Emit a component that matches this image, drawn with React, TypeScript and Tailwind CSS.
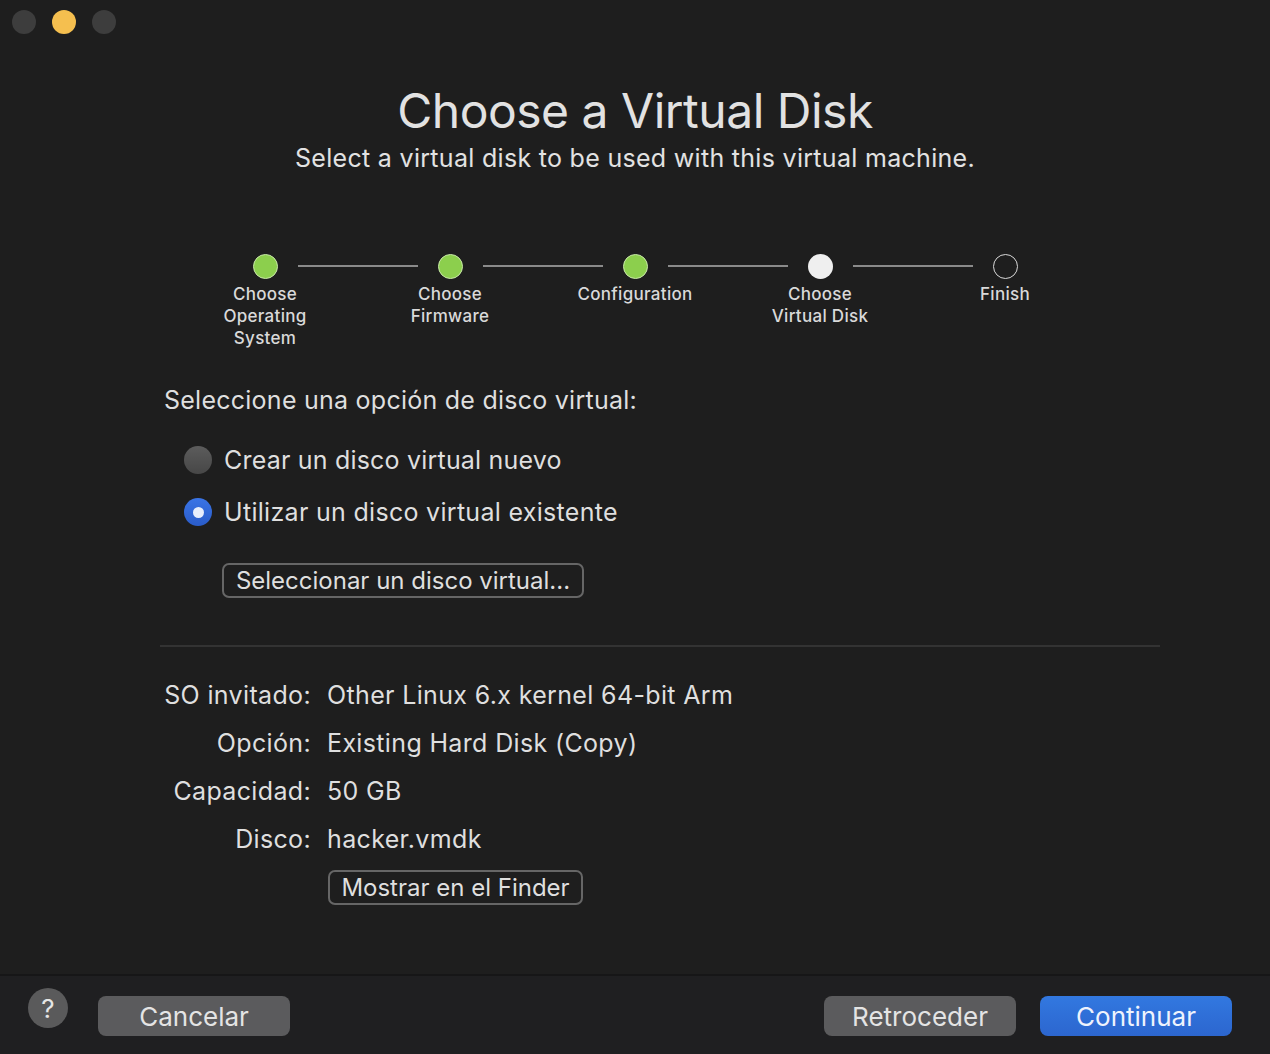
import React from "react";

const font = { fontFamily: "Inter, 'Noto Sans', sans-serif" };

function Step({ state, lines }: { state: "done" | "current" | "todo"; lines: string[] }) {
  return (
    <div className="flex w-[25px] flex-col items-center">
      {state === "done" && <div className="h-[25px] w-[25px] shrink-0 rounded-full border border-[#c9e8a8] bg-[#8ccf4d]" />}
      {state === "current" && <div className="h-[25px] w-[25px] shrink-0 rounded-full bg-[#efefef]" />}
      {state === "todo" && <div className="h-[25px] w-[25px] shrink-0 rounded-full border-[1.5px] border-[#d8d8d8]" />}
      <div className="mt-[4px] text-center text-[17px] font-medium leading-[22px] tracking-[0.3px] text-[#d9d9d9]">
        {lines.map((l) => (
          <div key={l} className="whitespace-nowrap">{l}</div>
        ))}
      </div>
    </div>
  );
}

function Line() {
  return <div className="mx-[20px] mt-[11px] h-[2px] w-[120px] shrink-0 self-start bg-[#8a8a8a]" />;
}

export default function App() {
  return (
    <div style={font} className="flex h-[1054px] w-[1270px] flex-col overflow-hidden bg-[#1e1e1e] text-[#dfdfdf]">
      {/* title bar */}
      <div className="flex h-[43px] items-center gap-[16px] pl-[12px]">
        <div className="h-[24px] w-[24px] rounded-full bg-[#3d3d3d]" />
        <div className="h-[24px] w-[24px] rounded-full bg-[#f5bf4f]" />
        <div className="h-[24px] w-[24px] rounded-full bg-[#3d3d3d]" />
      </div>

      <div className="flex flex-1 flex-col">
        <div className="mt-[38px] text-center text-[48px] leading-[60px] tracking-[-0.5px] text-[#e2e2e2]">Choose a Virtual Disk</div>
        <div className="mt-[2px] text-center text-[25px] leading-[30px] tracking-[0.3px] text-[#e2e2e2]">Select a virtual disk to be used with this virtual machine.</div>

        {/* stepper */}
        <div className="mt-[81px] flex justify-center">
          <div className="flex items-start">
            <Step state="done" lines={["Choose", "Operating", "System"]} />
            <Line />
            <Step state="done" lines={["Choose", "Firmware"]} />
            <Line />
            <Step state="done" lines={["Configuration"]} />
            <Line />
            <Step state="current" lines={["Choose", "Virtual Disk"]} />
            <Line />
            <Step state="todo" lines={["Finish"]} />
          </div>
        </div>

        <div className="mt-[35px] pl-[164px] text-[25px] leading-[32px] tracking-[0.25px]">Seleccione una opción de disco virtual:</div>

        <div className="mt-[28px] flex flex-col gap-[20px] pl-[184px]">
          <div className="flex items-center gap-[12px]">
            <div className="h-[28px] w-[28px] rounded-full bg-gradient-to-b from-[#5c5c5c] to-[#474747]" />
            <div className="text-[25px] leading-[32px] tracking-[0.2px]">Crear un disco virtual nuevo</div>
          </div>
          <div className="flex items-center gap-[12px]">
            <div className="flex h-[28px] w-[28px] items-center justify-center rounded-full bg-gradient-to-b from-[#3a74e6] to-[#2a5cc9]">
              <div className="h-[11px] w-[11px] rounded-full bg-[#e8eefc]" />
            </div>
            <div className="text-[25px] leading-[32px] tracking-[0.3px]">Utilizar un disco virtual existente</div>
          </div>
        </div>

        <div className="mt-[35px] pl-[222px]">
          <div className="inline-flex h-[35px] w-[362px] items-center justify-center rounded-[7px] border-[2px] border-[#666666] text-[24px] leading-none">
            Seleccionar un disco virtual...
          </div>
        </div>

        <div className="ml-[160px] mr-[110px] mt-[47px] h-[2px] bg-[#333333]" />

        <div className="mt-[32px] grid grid-cols-[151px_1fr] gap-x-[16px] gap-y-[16px] pl-[160px] text-[25px] leading-[32px] tracking-[0.35px]">
          <div className="whitespace-nowrap text-right">SO invitado:</div>
          <div>Other Linux 6.x kernel 64-bit Arm</div>
          <div className="text-right">Opción:</div>
          <div>Existing Hard Disk (Copy)</div>
          <div className="text-right">Capacidad:</div>
          <div>50 GB</div>
          <div className="text-right">Disco:</div>
          <div>hacker.vmdk</div>
        </div>
        <div className="mt-[15px] pl-[328px]">
          <div className="inline-flex h-[35px] w-[255px] items-center justify-center rounded-[7px] border-[2px] border-[#666666] text-[24px] leading-none">
            Mostrar en el Finder
          </div>
        </div>
      </div>

      {/* footer */}
      <div className="flex h-[80px] items-start border-t-[2px] border-[#161617] bg-[#1f1f21] pl-[28px] pr-[38px]">
        <div className="mt-[12px] flex h-[40px] w-[40px] items-center justify-center rounded-full bg-[#5a5a5b] text-[26px] text-[#e6e6e6]">?</div>
        <div className="ml-[30px] mt-[20px] flex h-[40px] w-[192px] items-center justify-center rounded-[8px] bg-[#5b5b5d] text-[26px] text-[#e4e4e4]">Cancelar</div>
        <div className="flex-1" />
        <div className="mt-[20px] flex h-[40px] w-[192px] items-center justify-center rounded-[8px] bg-[#5b5b5d] text-[26px] text-[#e4e4e4]">Retroceder</div>
        <div className="ml-[24px] mt-[20px] flex h-[40px] w-[192px] items-center justify-center rounded-[8px] bg-gradient-to-b from-[#3278e0] to-[#2c66cf] text-[26px] text-[#eef3fd]">Continuar</div>
      </div>
    </div>
  );
}
